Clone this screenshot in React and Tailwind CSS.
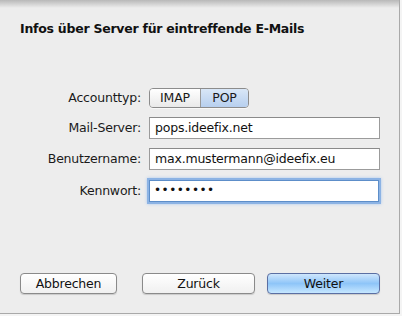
export default function App() {
  const font = { fontFamily: '"DejaVu Sans", "Lucida Grande", sans-serif' };
  return (
    <div className="relative w-[402px] h-[316px] overflow-hidden bg-[#f4f4f4]" style={font}>
      <div className="absolute left-0 top-0 w-[400px] h-[314px] bg-[#ededed] border-r border-b border-[#a9a9a9]">
        <div className="absolute inset-x-0 top-0 h-[8px] bg-gradient-to-b from-[#b8b8b8] to-[#ededed]/0" />
        <div className="flex flex-col pl-[20px] pt-[21px]">
          <div className="text-[12.5px] font-bold text-[#111] leading-[16px] tracking-[-0.25px]">
            Infos über Server für eintreffende E-Mails
          </div>
          <div className="mt-[51px] grid grid-cols-[121px_1fr] gap-x-[8px] items-center text-[12.5px] text-[#1a1a1a] tracking-[-0.2px]">
            <div className="text-right">Accounttyp:</div>
            <div className="flex h-[20px] w-[100px] rounded-[4px] border border-[#8c8c8c] overflow-hidden text-[12.5px] leading-[18px] shadow-[0_1px_0_rgba(255,255,255,0.6)]">
              <div className="w-[51px] text-center bg-gradient-to-b from-[#ffffff] to-[#e9e9e9] border-r border-[#9a9a9a]">IMAP</div>
              <div className="flex-1 text-center bg-gradient-to-b from-[#d9e7f7] to-[#b7cfee]">POP</div>
            </div>

            <div className="text-right mt-[9px]">Mail-Server:</div>
            <div className="mt-[9px] h-[22px] w-[231px] bg-white border border-[#9b9b9b] border-t-[#8a8a8a] pl-[5px] leading-[20px] text-[12.5px] text-[#111]">pops.ideefix.net</div>

            <div className="text-right mt-[9px]">Benutzername:</div>
            <div className="mt-[9px] h-[22px] w-[231px] bg-white border border-[#9b9b9b] border-t-[#8a8a8a] pl-[5px] leading-[20px] text-[12.5px] text-[#111]">max.mustermann@ideefix.eu</div>

            <div className="text-right mt-[10px]">Kennwort:</div>
            <div className="mt-[10px] h-[22px] w-[230px] bg-white border border-[#5d8ec9] shadow-[0_0_0_2px_#8cb3e4,0_0_3px_2px_#a9c7ee] pl-[4px] leading-[19px] text-[12px] text-[#111] tracking-[0.5px]">••••••••</div>
          </div>
          <div className="mt-[71px] flex items-center text-[12.5px] text-[#111] tracking-[-0.2px]">
            <div className="w-[97px] h-[21px] rounded-[4px] border border-[#8a8a8a] bg-gradient-to-b from-[#ffffff] to-[#f0f0f0] text-center leading-[19px] shadow-[0_1px_1px_rgba(0,0,0,0.15)]">Abbrechen</div>
            <div className="ml-[25px] w-[113px] h-[21px] rounded-[4px] border border-[#8a8a8a] bg-gradient-to-b from-[#ffffff] to-[#f0f0f0] text-center leading-[19px] shadow-[0_1px_1px_rgba(0,0,0,0.15)]">Zurück</div>
            <div className="ml-[12px] w-[113px] h-[21px] rounded-[4px] border border-[#5b6fa3] bg-gradient-to-b from-[#cfe6fc] via-[#8ec5f8] to-[#c6e7ff] text-center leading-[19px] shadow-[0_1px_1px_rgba(0,0,0,0.15)]">Weiter</div>
          </div>
        </div>
      </div>
    </div>
  );
}
